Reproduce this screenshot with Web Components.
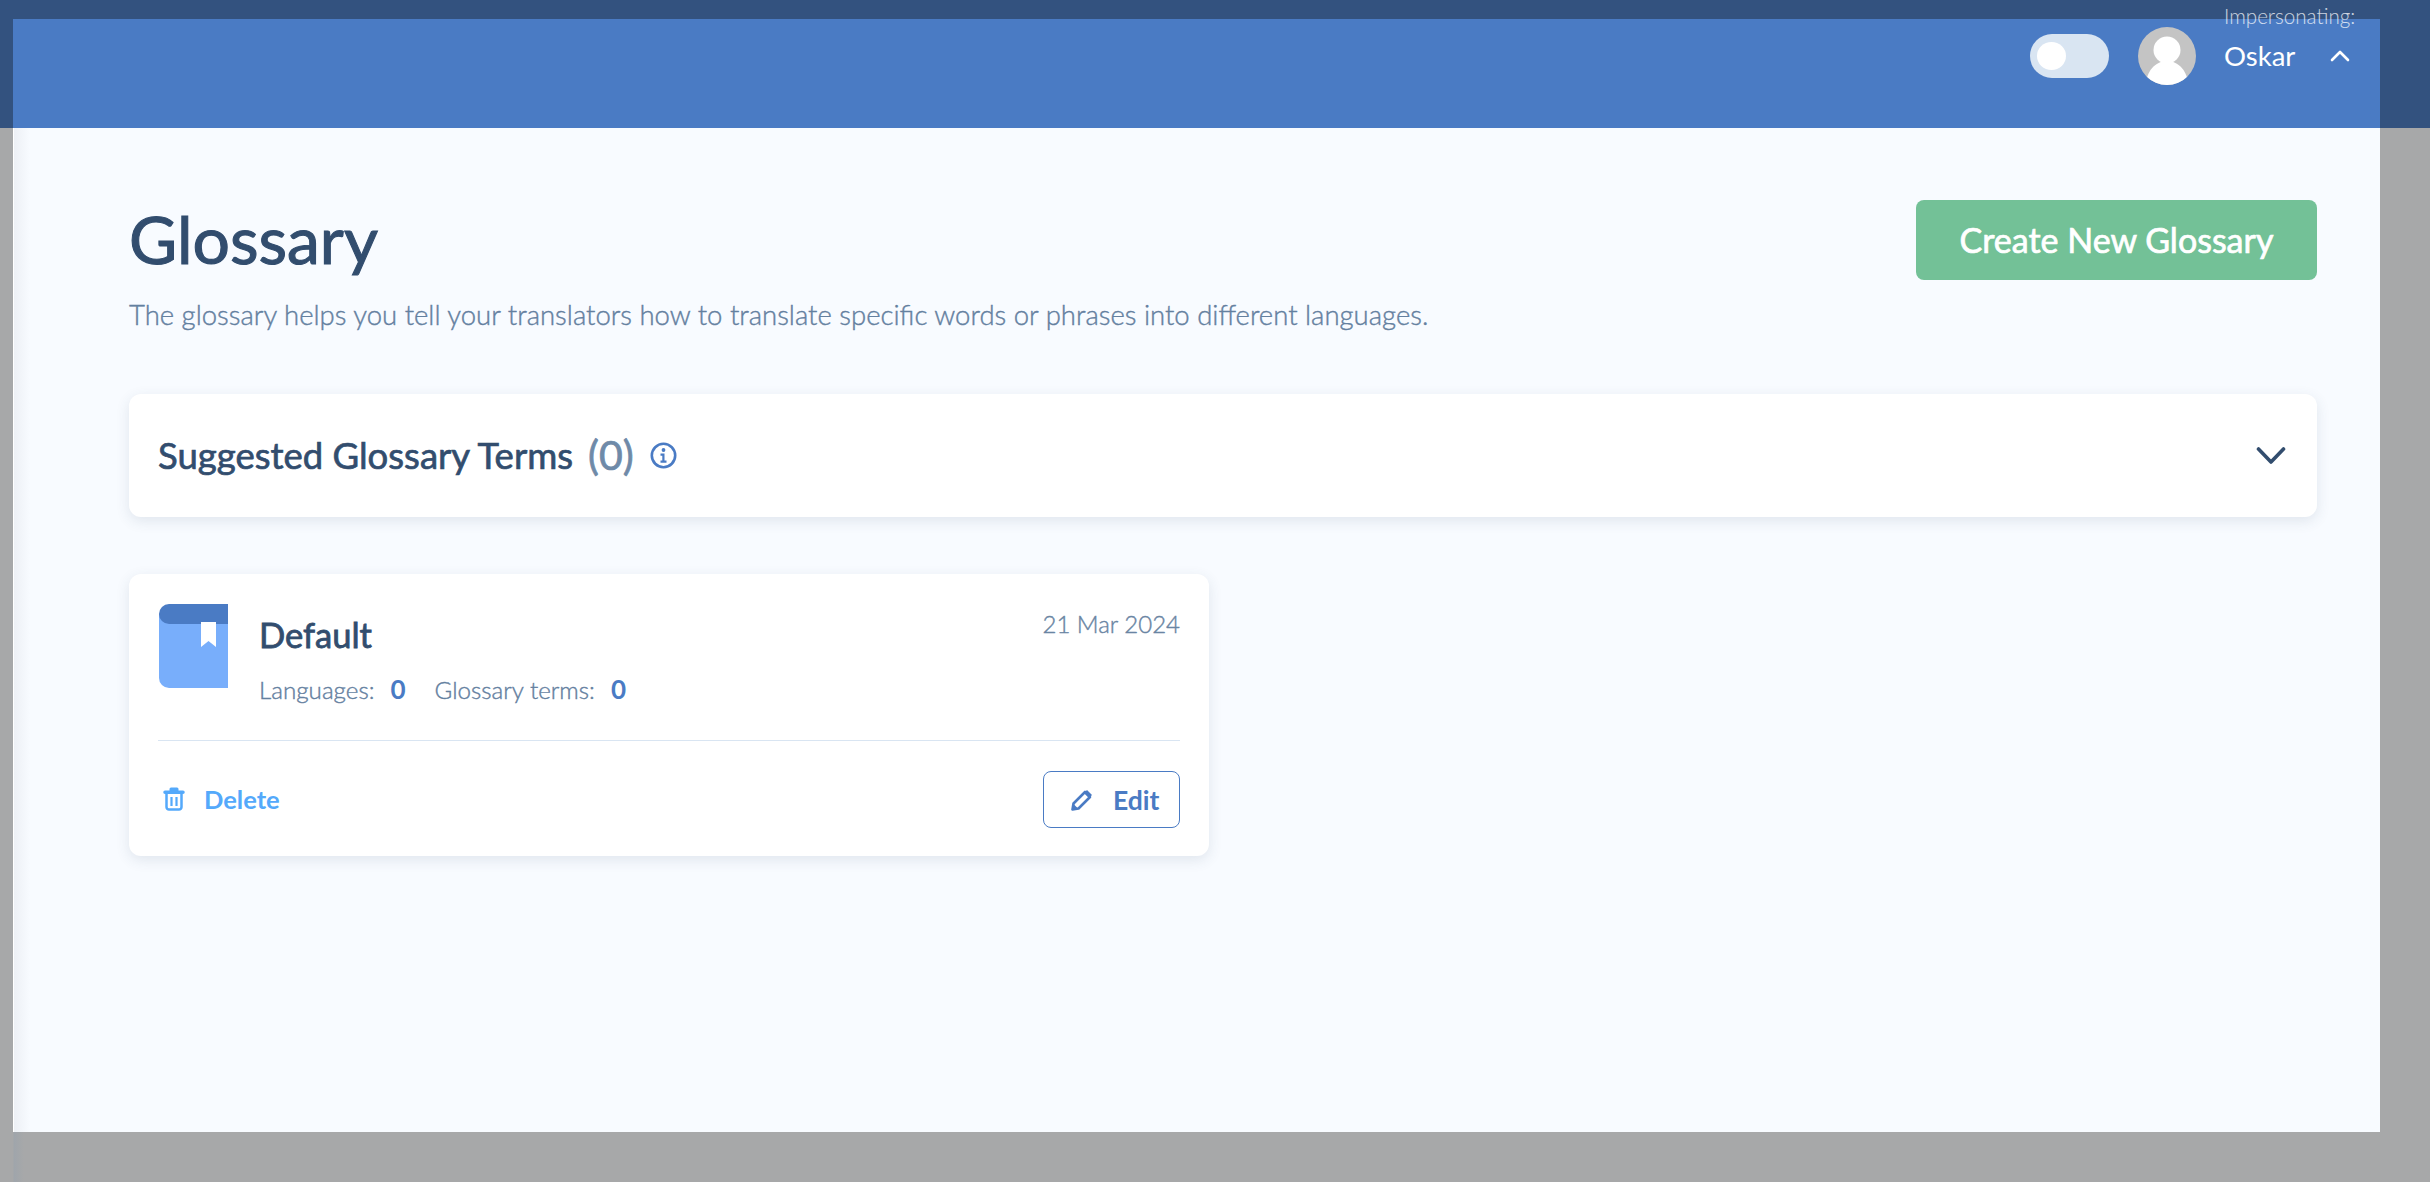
<!DOCTYPE html>
<html lang="en"><head><meta charset="utf-8"><title>Glossary</title>
<style>
html,body{margin:0;padding:0;height:100%}
body{font-family:Lato,"Noto Sans",sans-serif;color:#324d6e;overflow:hidden}
</style></head><body>
<app-shell>
  <app-header slot="header"></app-header>
  <page-head title-text="Glossary" description="The glossary helps you tell your translators how to translate specific words or phrases into different languages."></page-head>
  <suggested-card></suggested-card>
  <glossary-card name="Default" date="21 Mar 2024" languages="0" terms="0"></glossary-card>
</app-shell>
<script>
function def(name,html){
  customElements.define(name,class extends HTMLElement{
    connectedCallback(){
      if(this.shadowRoot)return;
      const s=this.attachShadow({mode:'open'});
      s.innerHTML=html.replace(/\{\{(\w+)\}\}/g,(m,k)=>this.getAttribute(k.replace(/_/g,'-'))??'');
    }
  });
}
def('app-shell',`<style>
:host{display:block;box-sizing:border-box;width:2430px;height:1182px;padding:19px 50px 50px 13px;
background:linear-gradient(90deg,#a7a8a9 0,#a7a8a9 13px,#9fa5ab 14px,#a7a8a9 24px) 0 128px no-repeat,#33527f;background-size:100% 100%}
.panel{height:1113px;display:flex;flex-direction:column;background:linear-gradient(90deg,#fff 0,#fff 1px,#edf0f5 1px,#f8fbff 17px)}
.body{display:flex;flex-direction:column;padding:0 63px 0 116px}
</style><div class="panel"><slot name="header"></slot><div class="body"><slot></slot></div></div>`);
def('app-header',`<style>
:host{display:flex;box-sizing:border-box;height:109px;background:#4a7bc4;justify-content:flex-end;padding:0 30px 0 0;align-items:flex-start}
.toggle{box-sizing:border-box;width:79px;height:44px;margin-top:15px;border-radius:22px;background:#d9e5f2;padding:8px 7px}
.knob{width:29px;height:28px;border-radius:50%;background:#fff}
.avatar{width:58px;height:58px;margin:8px 28px 0 29px;display:block}
.user{display:flex;flex-direction:column;margin-top:-16px;width:126px}
.imp{font-size:20.6px;line-height:26px;font-weight:300;color:#fff;opacity:.75;white-space:nowrap}
.row{display:flex;align-items:center;justify-content:space-between;margin-top:8px;height:36px;color:#fff;font-size:27.5px}
svg.c{width:20px;height:13px}
</style><div class="toggle"><div class="knob"></div></div>
<svg class="avatar" viewBox="0 0 58 58"><defs><clipPath id="a"><circle cx="29" cy="29" r="29"/></clipPath></defs><circle cx="29" cy="29" r="29" fill="#c4c4c4"/><g clip-path="url(#a)" fill="#fff"><circle cx="29" cy="23" r="13.5"/><path d="M8 58c0-13 9-24 21-24s21 11 21 24z"/></g></svg>
<div class="user"><div class="imp">Impersonating:</div><div class="row"><span>Oskar</span><svg class="c" viewBox="0 0 20 13"><path d="M2 11l8-8 8 8" fill="none" stroke="#fff" stroke-width="2.6" stroke-linecap="round" stroke-linejoin="round"/></svg></div></div>`);
def('page-head',`<style>
:host{display:flex;justify-content:space-between;align-items:flex-start;padding-top:72px}
h1{margin:0;font-size:66px;line-height:78px;font-weight:400;-webkit-text-stroke:1.1px #324d6e;color:#324d6e}
p{margin:17px 0 0;font-size:27.5px;line-height:40px;font-weight:300;color:#64809f;-webkit-text-stroke:.4px #64809f;white-space:nowrap}
.btn{box-sizing:border-box;width:401px;height:80px;border-radius:8px;background:#73c197;color:#fff;font-size:34px;font-weight:400;-webkit-text-stroke:.7px #fff;display:flex;align-items:center;justify-content:center;padding-bottom:2px}
</style><div><h1>{{title_text}}</h1><p>{{description}}</p></div><div class="btn">Create New Glossary</div>`);
def('suggested-card',`<style>
:host{display:flex;box-sizing:border-box;height:123px;margin-top:59px;background:#fff;border-radius:12px;box-shadow:0 4px 14px rgba(50,77,110,.12);align-items:center;padding:0 31px 0 29px;color:#324d6e}
.t{font-size:36.5px;font-weight:400;-webkit-text-stroke:.7px #324d6e;margin-bottom:2px}
.n{font-size:41px;font-weight:400;-webkit-text-stroke:.7px #6f8aa8;color:#6f8aa8;margin:0 0 2px 15px}
.i{width:27px;height:27px;margin-left:16px}
.sp{flex:1}
.ch{width:30px;height:19px}
</style><span class="t">Suggested Glossary Terms</span><span class="n">(0)</span>
<svg class="i" viewBox="0 0 27 27"><circle cx="13.500" cy="13.500" r="11.700" fill="none" stroke="#4a7bc4" stroke-width="2.600"/><circle cx="13.500" cy="8" r="1.900" fill="#4a7bc4"/><path d="M10.500 11.500h4v7h2v2.200h-6v-2.200h1.800v-4.800h-1.800z" fill="#4a7bc4"/></svg>
<span class="sp"></span>
<svg class="ch" viewBox="0 0 30 19"><path d="M2.500 3l12.500 13 12.500-13" fill="none" stroke="#324d6e" stroke-width="3.600" stroke-linecap="round" stroke-linejoin="round"/></svg>`);
def('glossary-card',`<style>
:host{display:block;box-sizing:border-box;width:1080px;height:282px;margin-top:57px;background:#fff;border-radius:12px;box-shadow:0 4px 14px rgba(50,77,110,.12);padding:30px 29px 0 29px}
.top{display:flex;height:136px;border-bottom:1px solid #d9e5f2}
.book{width:69px;height:84px;margin-left:1px;flex:none}
.info{flex:1;margin-left:31px}
.name{font-size:34.5px;line-height:42px;font-weight:400;-webkit-text-stroke:.8px #324d6e;color:#324d6e;margin-top:10px}
.meta{display:flex;align-items:baseline;margin-top:18px;font-size:24.2px;line-height:30px;font-weight:300;color:#64809f;-webkit-text-stroke:.4px #64809f}
.meta b{font-weight:700;color:#4a7bc4;-webkit-text-stroke:0;font-size:26px;margin:0 29px 0 16px}
.date{font-size:24px;line-height:30px;font-weight:300;color:#6a85a3;-webkit-text-stroke:.4px #6a85a3;margin-top:5px;white-space:nowrap}
.foot{display:flex;justify-content:space-between;align-items:center;padding-top:30px}
.del{display:flex;align-items:center;color:#54a9fb;font-size:25.5px;font-weight:700;margin:-2px 0 0 5px}
.del svg{width:22px;height:25px;margin-right:19px}
.edit{box-sizing:border-box;width:137px;height:57px;border:1px solid #4a7bc4;border-radius:8px;color:#4a7bc4;font-size:26.5px;font-weight:700;display:flex;align-items:center;padding-left:27px}
.edit svg{width:22px;height:22px;margin-right:20px}
</style><div class="top">
<svg class="book" viewBox="0 0 69 84"><path d="M0 10h69v74H10a10 10 0 0 1-10-10z" fill="#78aefb"/><path d="M10 0h59v20H10A10 10 0 0 1 10 0z" fill="#4a7bc4"/><path d="M42 18h15v25l-7.500-6-7.500 6z" fill="#fff"/></svg>
<div class="info"><div class="name">{{name}}</div><div class="meta"><span>Languages:</span><b>{{languages}}</b><span>Glossary terms:</span><b>{{terms}}</b></div></div>
<div class="date">{{date}}</div></div>
<div class="foot"><div class="del"><svg viewBox="0 0 22 25"><path d="M8 1.500h6a1.500 1.500 0 0 1 1.500 1.500v1.500H20a1.500 1.500 0 0 1 0 3.500H2a1.500 1.500 0 0 1 0-3.500h4.500V3A1.500 1.500 0 0 1 8 1.500z" fill="#54a9fb"/><path d="M3.500 8v13a2.500 2.500 0 0 0 2.500 2.500h10a2.500 2.500 0 0 0 2.500-2.500V8" fill="none" stroke="#54a9fb" stroke-width="2.500"/><path d="M8.500 11v9M13.500 11v9" stroke="#54a9fb" stroke-width="2.200"/></svg>Delete</div>
<div class="edit"><svg viewBox="0 0 22 22"><path d="M1.500 20.500l1-6L14 3l5 5L7.500 19.500z" fill="none" stroke="#4a7bc4" stroke-width="2.600" stroke-linejoin="round"/><path d="M1 21l1.500-6 4.500 4.500z" fill="#4a7bc4"/><path d="M13 4l3-3 5 5-3 3z" fill="#4a7bc4"/></svg>Edit</div></div>`);
</script>
</body></html>
